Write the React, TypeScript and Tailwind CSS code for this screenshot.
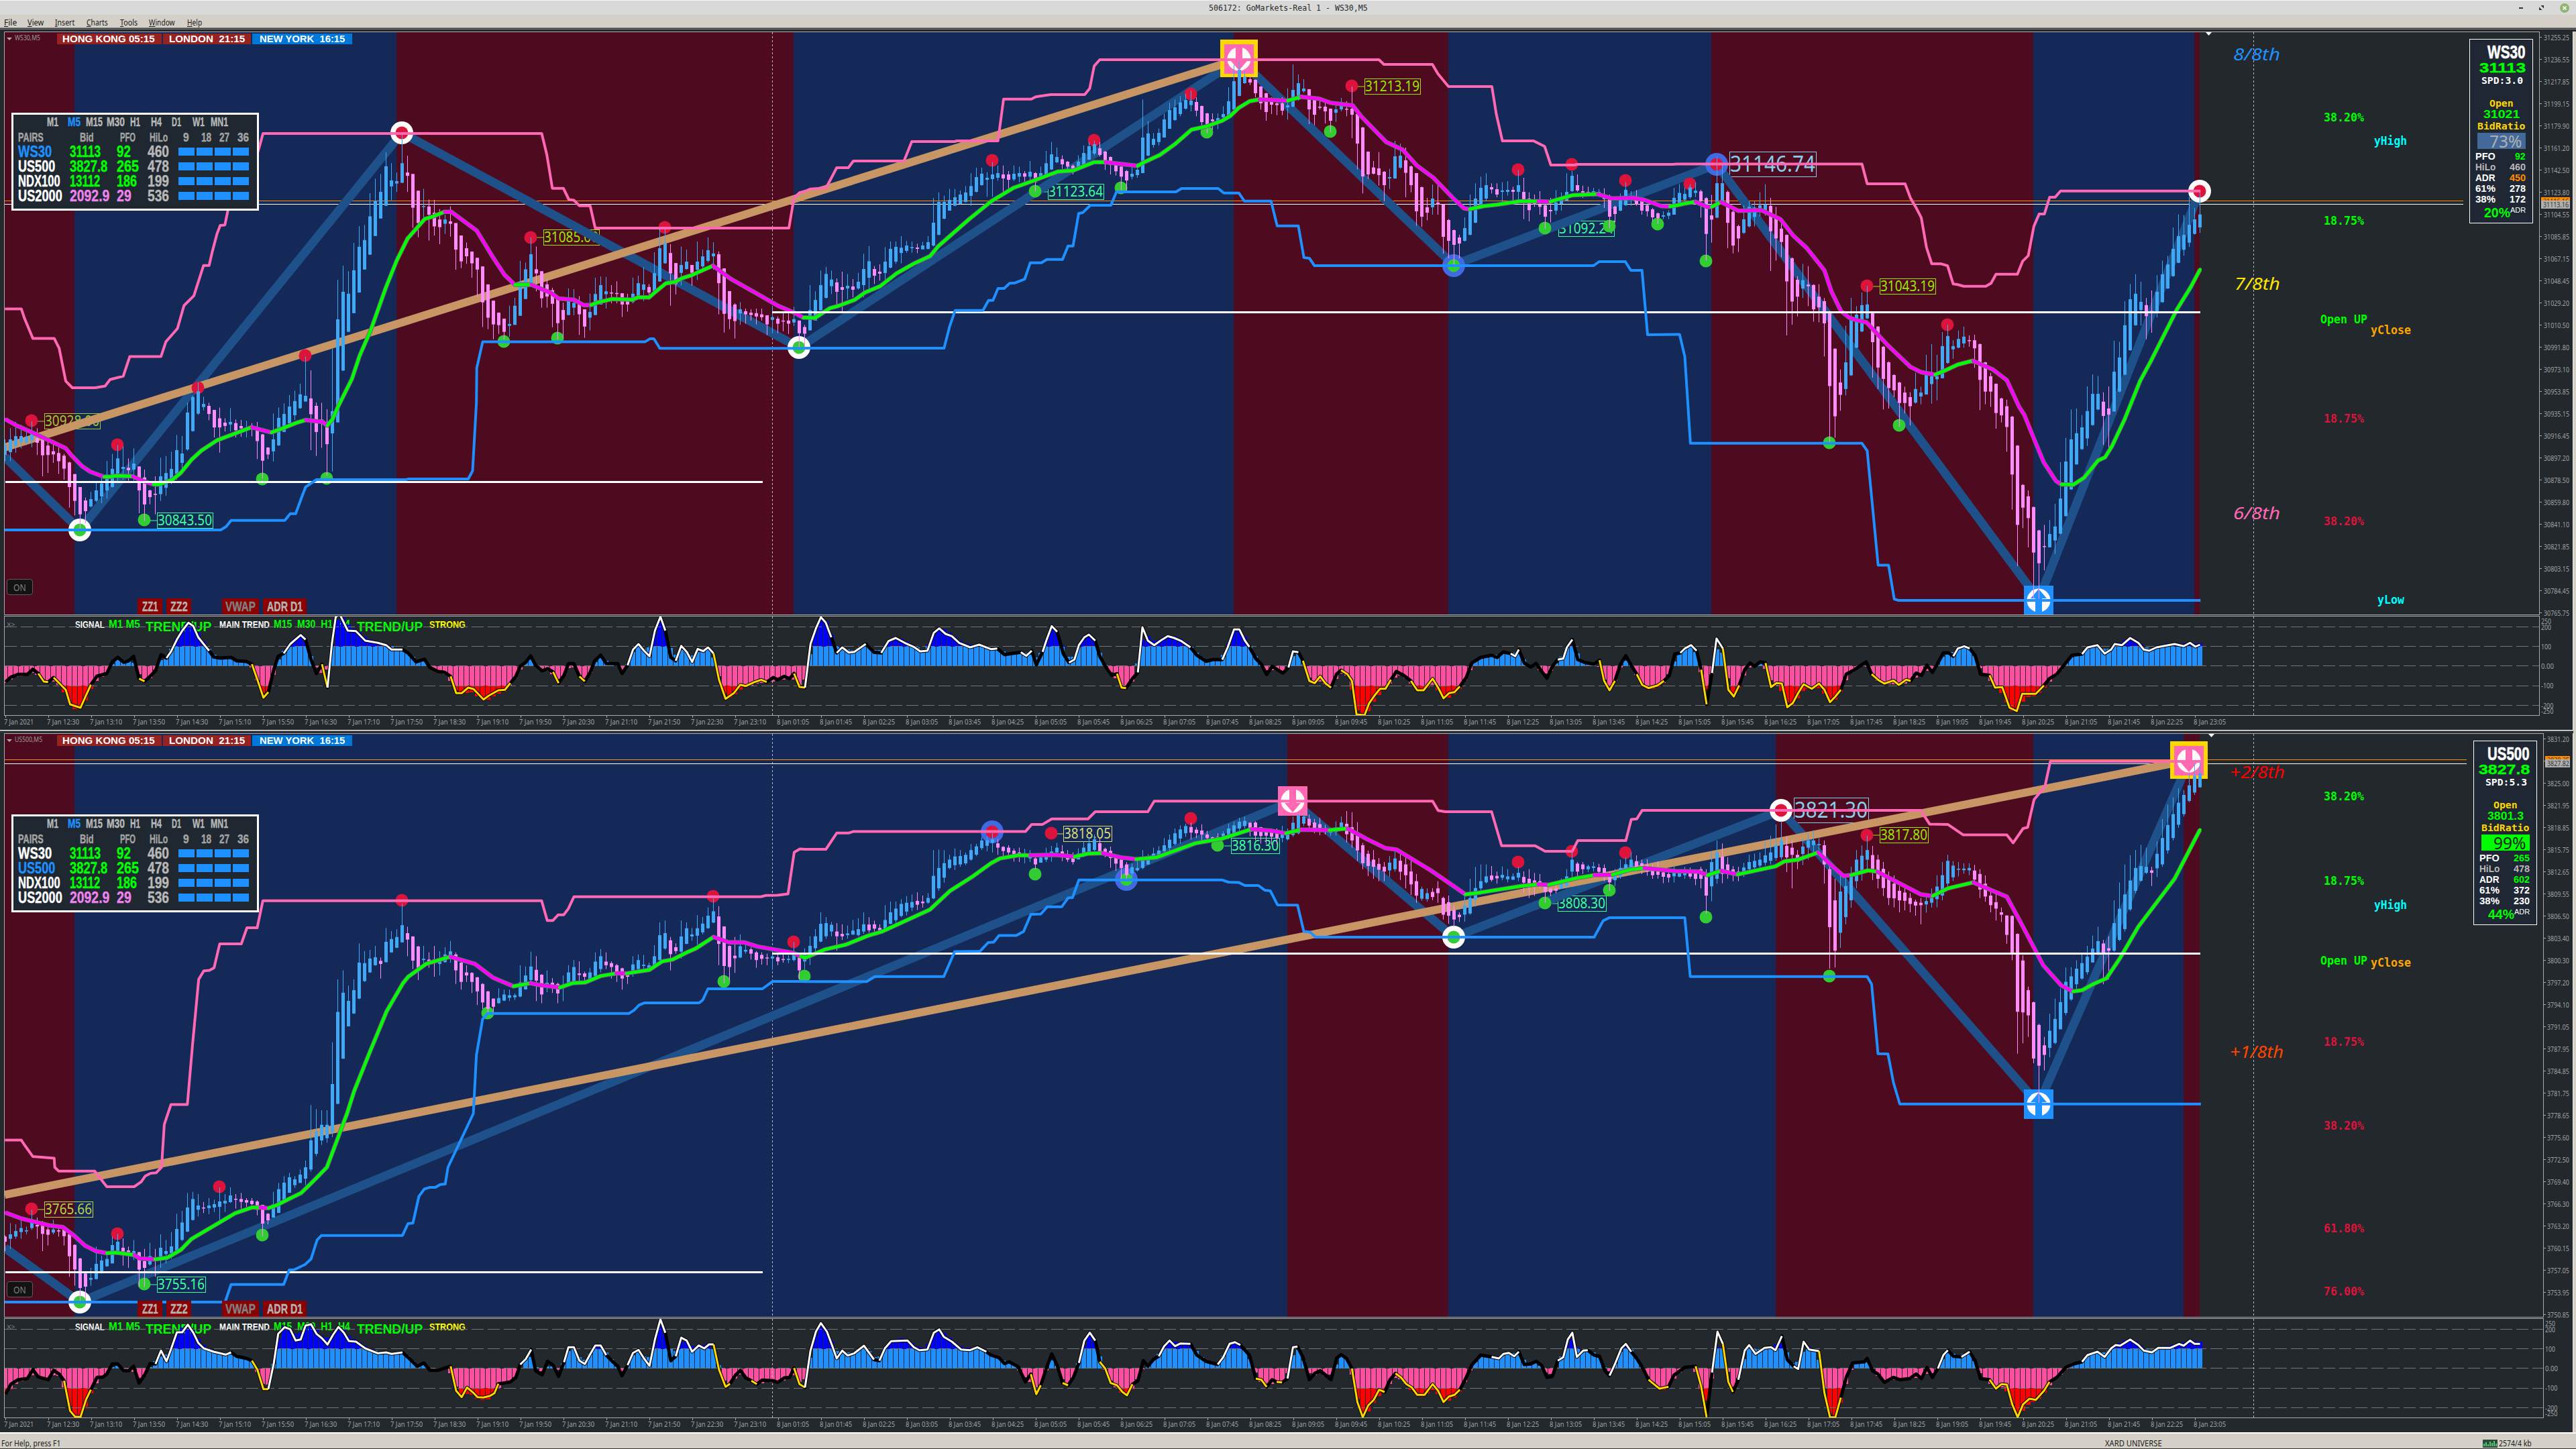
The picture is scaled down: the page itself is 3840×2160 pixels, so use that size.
import React, { useLayoutEffect, useRef, useState } from 'react';

type Pt = { x: number; y: number; c: string };
type Frame = [number, number, number, number];

// Segments keep their own origin and scale: [originX, originY, scaleX, scaleY]
const trace = ([ox, oy, kx, ky]: Frame, data: string): Pt[] => {
  let c = '';
  return data
    .trim()
    .split(/\s+/)
    .map((p) => {
      const m = p.match(/^([a-z]?)(-?[\d.]+),(-?[\d.]+)$/)!;
      if (m[1]) c = m[1];
      return { x: ox + +m[2] / kx, y: oy + +m[3] / ky, c };
    });
};

type Bar = { x: number; top: number; bot: number; hi: number; lo: number; up: boolean };

const candles = ([ox, oy, kx, ky]: Frame, data: string): Bar[] =>
  data
    .trim()
    .split(/\s+/)
    .map((p) => {
      const [x, top, bot, hi, lo] = p.slice(1).split(',').map(Number);
      return {
        x: 7 + 8 * Math.round((ox + x / kx - 7) / 8),
        top: oy + top / ky,
        bot: oy + bot / ky,
        hi: oy + hi / ky,
        lo: oy + lo / ky,
        up: p[0] === 'u',
      };
    });

// One candle every 8px, gaps are interpolated
const fillBars = (list: Bar[]): Bar[] => {
  const out: Bar[] = [];
  list.forEach((b, i) => {
    const a = list[i - 1];
    if (a) {
      if (b.x <= a.x) return;
      for (let x = a.x + 8; x < b.x; x += 8) {
        const t = (x - a.x) / (b.x - a.x);
        const j = ((x * 37) % 17) - 8;
        const mix = (p: number, q: number) => p + (q - p) * t;
        const top = mix(a.top, b.top) + j / 3;
        const bot = mix(a.bot, b.bot) + j / 4;
        out.push({ x, top, bot, hi: Math.min(top, mix(a.hi, b.hi) + j), lo: Math.max(bot, mix(a.lo, b.lo) + ((x * 13) % 11) - 5), up: b.up });
      }
    }
    out.push(b);
  });
  return out;
};

const path = (pts: Pt[]) => pts.map((p) => `${p.x.toFixed(1)},${p.y.toFixed(1)}`).join(' ');

// Splits a coloured trace into runs that share their end points
const runs = (pts: Pt[]) => {
  const out: { c: string; pts: Pt[] }[] = [];
  pts.forEach((p, i) => {
    const last = out[out.length - 1];
    if (last && last.c === p.c) last.pts.push(p);
    else out.push({ c: p.c, pts: i ? [pts[i - 1], p] : [p] });
  });
  return out;
};

const A: Frame = [0, 600, 1.225, 3];
const B: Frame = [300, 170, 1.7043, 2.8];
const C: Frame = [1200, 30, 1.2062, 3];
const D: Frame = [2500, 180, 1.9122, 2.0632];
const E: Frame = [0, 1740, 1.225, 3];
const F: Frame = [0, 1060, 1.3067, 2.6133];
const G: Frame = [1200, 1110, 0.7396, 2.8];
const O1: Frame = [1200, 915, 0.7396, 3];
const O2: Frame = [1200, 1960, 0.7396, 3];
const W: Frame = [0, 0, 0.40833, 0.40833];

type Chart = {
  symbol: string;
  top: number;
  width: number;
  height: number;
  bands: number[];
  bars: Bar[];
  upper: Pt[];
  lower: Pt[];
  ma: Pt[];
  zigzag: string;
  trend: string;
  highs: number[][];
  lows: number[][];
  rings: [number, number, string, string][];
  arrows: [number, number, string, boolean][];
  tags: [number, number, number, number, string, string][];
  opens: number[];
  bid: number;
  ask: number;
  quoteEnd: number;
  notes: [number, number, number, string, string][];
  murrey: [number, number, number, string, string][];
  osc: Pt[];
};

const ws30: Chart = {
  symbol: 'WS30,M5',
  top: 48,
  width: 3778,
  height: 868,
  bands: [7, 111, 591, 1183, 1839, 2159, 2551, 3031, 3271, 3279],
  bars: fillBars([
    ...candles(A, `u10,190,235,165,262 u20,165,222,115,262 u40,150,178,100,205 u58,140,170,85,200 d68,160,180,115,235 d78,165,236,160,330 d97,218,232,185,270 d117,238,296,230,345 d127,268,378,265,470 d137,320,440,320,505 d146,378,500,378,570 d156,438,486,425,540 u166,432,465,400,470 u186,362,420,335,450 u205,297,378,230,380 u215,250,318,190,350 u225,288,297,195,345 d235,292,303,250,350 u244,273,300,205,350 d254,286,393,286,495 d264,335,456,300,530 d274,393,423,390,455 d284,408,413,330,500 u293,330,410,247,440 u313,297,350,220,365 u323,213,320,145,345 u333,228,270,150,310 u343,45,210,0,215 u352,-25,128,-30,130 u362,-50,50,-90,55`),
    ...candles(B, `u6,1210,1223,1180,1237 d19,1218,1252,1205,1278 d33,1235,1308,1235,1350 d47,1270,1308,1225,1413 d60,1288,1302,1270,1325 u74,1285,1296,1227,1325 d88,1290,1320,1275,1350 d101,1302,1312,1277,1347 u115,1308,1312,1280,1350 d128,1306,1312,1290,1345 d142,1320,1365,1285,1440 d156,1337,1447,1335,1520 d170,1392,1421,1390,1440 u183,1358,1408,1250,1450 u197,1268,1383,1225,1385 u210,1252,1327,1208,1327 u224,1221,1291,1173,1291 u238,1198,1257,1155,1277 u251,1170,1228,1126,1230 u265,1176,1200,1012,1200 d279,1187,1253,1070,1403 d292,1218,1327,1204,1427 d306,1275,1288,1205,1393 d320,1290,1378,1232,1510 u333,1240,1333,980,1492 u347,857,1287,692,1287 u361,742,1071,633,1071 u374,750,909,656,909 u388,652,831,538,831 u402,554,745,468,745 u415,526,649,463,649 u429,427,587,330,587 u442,362,509,270,509 u456,325,436,250,436 u470,218,383,160,383 u483,277,302,205,360 u497,280,290,244,325 u510,205,287,85,287 d524,244,258,174,325 d538,250,391,250,475 d551,320,455,320,514 u565,384,388,312,440 d579,386,420,357,528 d592,412,469,358,507 d606,440,472,397,543 u619,440,458,420,500 d633,448,458,385,512 d647,455,566,455,650 d660,507,615,507,643 d674,560,594,536,625 d688,574,623,574,683 d701,600,649,600,764 d715,636,786,636,889 d729,711,850,711,898 d742,779,878,779,940 d756,829,881,829,918 d769,854,909,854,940 u783,876,884,800,930 u797,800,880,767,880 u810,700,842,613,842 u824,648,772,620,772 u838,585,705,515,705 d851,648,665,553,740 d865,656,769,656,808 d879,711,762,690,808 d892,735,792,725,890 d906,765,873,765,940 d919,818,859,787,935 u933,775,839,728,839 u947,788,808,731,840 d960,788,836,760,922 d974,815,887,815,934 u988,826,850,750,903 u1001,751,839,683,839 u1015,714,795,678,795 u1028,740,752,680,812 d1042,745,749,714,790 d1056,747,750,698,790 d1069,748,795,748,847 d1083,770,795,750,825 u1097,750,785,683,790 u1110,706,767,675,767 u1124,711,734,639,780 d1138,722,745,710,775 u1151,664,740,577,745 u1165,560,699,480,700 u1178,540,623,482,625 d1192,580,665,543,800 d1206,622,710,622,753 u1219,630,663,553,715 u1233,616,647,566,650 d1247,630,663,630,716 u1260,616,650,532,693 u1274,594,636,566,650 u1288,568,613,515,620 u1301,582,594,535,650 d1315,585,706,573,836 d1328,644,834,644,912 d1342,739,856,739,898 d1356,795,864,790,937 u1369,815,832,785,880 d1383,823,836,812,875 d1397,829,839,815,862 d1410,831,845,812,878 d1424,836,848,812,862 d1437,840,878,840,923 u1451,848,859,800,915 d1465,854,875,845,915 d1478,862,864,826,907 d1492,862,875,832,918 u1506,856,870,805,885 d1519,862,915,862,978 d1533,889,917,880,978 u1547,818,903,714,903 u1560,776,862,740,862`),
    ...candles(C, `u28,1185,1298,1120,1300 u38,1135,1242,1103,1245 u47,1160,1190,1120,1225 d57,1173,1215,1155,1280 d67,1194,1206,1125,1303 u77,1188,1200,1135,1248 d86,1191,1206,1158,1240 u96,1170,1200,1130,1205 u106,1113,1185,1045,1240 u115,1078,1152,1010,1210 d125,1113,1143,1100,1180 d134,1125,1134,1092,1165 u144,1080,1131,1015,1165 u154,1023,1107,990,1110 u163,1014,1080,990,1090 u173,1018,1041,966,1088 u183,1008,1032,988,1040 u192,1015,1020,990,1040 d202,1017,1023,1000,1042 u221,993,1023,966,1025 u231,906,1008,795,1012 u240,813,960,770,962 u250,813,888,785,890 u260,804,852,755,852 u269,792,830,755,832 u279,780,822,762,825 u289,771,813,742,815 u298,742,786,685,830 u308,702,768,660,770 u318,687,738,660,740 u327,705,714,680,790 u337,690,711,635,790 u347,684,705,650,718 d356,690,708,650,770 d366,690,714,675,770 u376,687,712,650,720 u385,684,700,655,725 d395,685,700,675,722 u405,678,700,630,720 d414,684,725,680,766 u424,684,700,655,705 u434,640,700,585,700 u443,600,668,545,670 u453,612,636,570,640 d463,622,645,605,665 d472,633,655,630,680 d482,651,665,645,690 u492,633,668,605,670 u501,594,650,560,655 u511,564,624,545,625 u520,555,597,540,605 d530,573,603,545,610 d540,588,640,585,670 d549,612,648,610,690 d559,640,676,635,695 d569,655,700,655,760 d578,675,717,670,770 u588,687,700,640,712 u598,669,693,640,705 u607,525,684,355,685 u617,507,606,452,608 u627,531,558,505,570 u636,504,545,485,560 u646,444,525,418,525 u656,402,486,370,486 u665,390,447,355,450 u675,368,420,340,430 u685,357,396,330,400 u694,360,380,315,408 d704,366,405,345,430 d713,384,456,382,475 d723,417,465,415,505 d733,444,452,417,490 u742,438,450,417,487 u752,420,435,385,440 u762,363,435,300,440 u771,273,400,200,405 u781,222,339,180,340 u790,253,282,228,285 d800,264,279,250,290 d810,267,327,265,345 d819,297,372,295,400 d829,327,411,325,450 d839,366,378,345,420 d848,372,380,350,425 d858,372,405,345,425 u868,381,390,305,445 u877,312,387,198,390 u887,282,357,243,360 u897,306,318,264,325 d906,309,399,308,465 d916,342,423,340,470 d925,387,392,350,400 d935,387,408,365,462 d945,396,450,395,500 u954,399,414,375,455 u964,375,399,348,408 d974,396,400,362,430 d984,396,423,298,528 d993,420,552,400,668 d1003,480,699,478,775 d1013,588,690,588,710 d1022,659,687,630,690 d1032,663,693,590,740 d1042,678,738,675,810 u1051,702,708,665,755 u1061,609,708,540,710 u1070,606,660,552,665 d1080,627,683,570,792 d1090,654,738,650,770 d1099,684,855,684,920 d1109,747,879,745,925 d1119,837,861,795,895 u1128,798,837,735,870 d1138,816,825,738,870 d1148,825,969,822,1045 d1157,894,987,890,1065 d1167,939,1005,937,1095 d1176,972,999,960,1065 u1186,930,987,882,990 u1196,849,960,780,962 u1205,798,906,730,908 u1215,750,832,700,835 u1225,738,798,685,810 d1234,747,757,730,775 d1244,756,780,730,792 u1254,762,768,725,815 u1263,759,768,720,785 d1273,759,768,745,812 u1283,738,768,670,810 d1292,768,810,705,890 d1302,798,850,770,900 d1311,815,825,780,835 d1321,824,835,765,870 d1331,828,879,825,932 d1340,849,855,795,905 u1350,816,852,760,870 u1360,790,822,770,852 u1369,768,807,685,810 u1379,696,765,675,768 d1389,738,762,690,768 d1398,765,773,740,795 d1408,768,776,745,785 u1417,765,776,750,790 u1427,768,774,755,790 d1437,783,800,752,840 d1446,786,879,780,930 d1456,834,867,830,905 u1465,804,852,775,855 u1475,759,828,725,830 u1485,795,803,765,830 d1494,800,825,760,830 d1504,801,852,795,870 d1514,828,855,825,878 d1523,846,882,840,900 d1533,864,885,860,912 u1543,873,879,855,890 u1552,861,875,850,890 u1562,795,870,750,870`),
    ...candles(D, `u7,222,253,195,260 u22,225,243,205,248 u37,205,235,195,240 u52,215,222,190,235 d68,217,247,212,298 d83,238,348,235,430 d98,291,304,228,375 u114,192,298,110,300 u129,192,247,130,250 d144,219,314,215,392 d160,280,384,275,408 d175,324,362,320,404 u190,303,345,260,348 u205,265,325,248,328 u221,267,296,247,325 u236,260,275,220,295 u251,257,275,195,292 d267,262,340,237,462 d282,296,362,265,430 d297,332,373,315,420 d312,351,494,350,660 d328,423,556,420,627 d343,489,541,478,602 u358,490,516,440,545 d374,504,509,447,570 d389,505,580,503,618 d404,541,574,503,620 d420,555,623,545,725 d435,588,816,585,990 d450,701,909,700,975 d466,805,843,765,892 u481,743,825,630,845 u496,612,783,545,785 u511,596,698,570,700 u527,567,648,528,650 u542,565,608,508,610 d557,592,681,590,790 d573,633,759,632,825 d588,695,794,693,888 d603,743,822,740,885 d618,782,829,780,850 d634,805,868,803,940 d649,836,868,818,900 d664,850,878,835,937 u680,825,867,775,870 u695,836,848,818,872 u710,782,842,720,842 u726,786,810,687,870 u741,786,795,720,860 u756,693,792,650,792 u771,662,745,628,748 u787,693,703,675,732 u802,671,698,645,700 u817,664,685,633,698 d832,675,678,660,695 d848,675,700,658,760 d863,687,797,685,890 d879,743,833,742,872 d894,786,833,775,880 d909,809,899,808,947 d925,854,906,852,928 d940,878,942,858,1018 d955,910,1088,908,1196 d971,999,1243,998,1370 d986,1120,1190,1118,1253 d1001,1155,1222,1137,1312 d1017,1188,1328,1187,1470 d1032,1260,1361,1258,1470 d1047,1308,1311,1243,1383 u1062,1271,1312,1228,1312 u1078,1248,1291,1178,1332 u1093,1162,1270,1050,1272 u1108,1048,1216,975,1217 u1124,980,1134,888,1135 u1139,961,1057,885,1057 u1154,943,1010,905,1012 u1169,893,977,817,1000 u1185,840,936,780,938 u1200,840,888,785,890 d1215,864,908,835,997 d1231,885,904,817,1010 u1246,772,894,677,895 u1261,728,833,680,835 u1276,629,781,555,783 u1292,549,706,502,707 u1307,532,629,472,630 u1322,557,582,495,630 d1338,567,601,545,672 d1353,585,588,522,652 u1368,526,586,475,605 u1384,472,558,430,560 u1399,442,516,415,517 u1414,394,478,328,480 u1430,355,437,288,438 u1445,351,397,290,415 u1460,320,375,235,388 u1475,303,348,268,350 u1491,288,328,220,345`),
  ]),
  upper: [
    ...trace(W, `3,188 13,188 15,194 20,206 33,206 36,212 40,232 44,236 58,236 64,235 67,231 75,229 79,217 98,217 101,208 108,200 112,186 118,180`),
    ...trace(B, `6,632 20,632 28,575 40,500 48,465 60,463 68,400 140,180 147,140 157,81 865,81 878,170 892,310 920,310 934,357 947,360 961,383 988,383 1001,476 1493,476 1506,350 1520,328`),
    ...trace(C, `0,765 10,755 38,750 57,660 78,660 87,630 178,630 192,543 270,543 272,540 347,540 357,353 407,353 415,343 442,333 503,333 512,305 520,205 530,177 1032,177 1041,198 1128,198 1138,240 1157,297 1235,297 1243,420 1254,540 1310,540 1330,565 1341,648 1385,648 1387,645 1560,645`),
    ...trace(D, `0,133 527,133 542,194 650,194 665,237 680,265 696,298 711,390 726,440 753,440 771,446 787,502 800,504 817,509 880,509 895,500 909,472 970,472 985,432 1001,415 1017,325 1032,287 1047,287 1062,235 1078,235 1093,216 1492,216`),
  ],
  lower: [
    ...trace(A, `8,570 403,570 413,555 422,527 520,527 530,497 540,497 550,430 558,378 578,345 742,345 745,342 855,342 863,305 870,0`),
    ...trace(B, `700,1060 715,951 1127,951 1140,938 1150,938 1165,978 1530,978`),
    ...trace(C, `0,1467 250,1467 260,1370 270,1298 320,1298 330,1253 338,1253 347,1200 358,1200 368,1177 378,1175 395,1158 405,1085 425,1085 435,1070 463,1070 473,1010 482,1010 492,865 500,860 513,828 550,828 560,768 667,768 677,753 743,753 753,773 780,773 790,809 838,809 849,920 887,920 897,1062 907,1065 916,1098 1418,1098 1428,1080 1475,1080 1485,1119 1505,1119 1515,1407`),
    ...trace(D, `0,657 7,657 22,725 38,992 527,992 542,1015 573,1367 603,1367 619,1471 630,1475 1492,1475`),
  ],
  ma: [
    ...trace(A, `m10,75 30,103 55,130 80,158 120,205 130,235 150,285 165,310 190,332 g200,332 212,328 242,330 m260,350 280,366 g290,367 315,345 330,315 350,255`),
    ...trace(B, `g0,1405 40,1362 128,1307 m150,1317 178,1329 g205,1313 240,1290 265,1277 m308,1285 320,1300 g333,1275 348,1220 383,1105 402,1010 430,905 470,720 497,610 524,520 568,438 590,427 618,408 m635,408 700,487 740,595 770,670 797,713 g838,712 m890,748 908,770 948,776 972,798 990,797 g1010,785 1045,772 1095,775 1110,765 1138,765 1150,748 1180,707 1205,700 1222,685 1245,673 1300,633 m1345,688 1410,748 1465,800 1505,828 1530,850`),
    ...trace(C, `g0,1330 18,1332 45,1288 60,1278 90,1250 108,1218 135,1190 165,1132 195,1090 225,1055 240,1010 295,890 335,810 375,750 412,717 455,677 482,673 520,635 540,635 m598,652 g610,635 638,603 665,555 695,490 722,475 750,450 765,428 780,392 800,362 817,355 m868,360 g892,343 m925,352 945,370 985,382 1000,430 1045,545 1075,580 1100,650 1130,705 1165,795 1185,842 1195,845 g1220,832 1245,825 1285,810 1318,810 m1340,812 g1380,783 1425,778 m1450,797 1490,795 1510,805 1540,832 1555,833`),
    ...trace(D, `g0,260 20,255 52,249 m85,265 98,265 g125,250 m175,277 240,275 295,303 330,352 370,392 420,460 440,525 467,585 490,605 510,613 540,620 600,690 665,757 695,773 735,781 g760,770 800,750 843,738 m900,765 940,798 975,880 990,905 1020,985 1045,1050 1080,1108 1095,1118 g1130,1119 1160,1098 1200,1045 1220,1035 1240,1000 1275,920 1320,800 1350,740 1425,580 1465,510 1491,457`),
  ],
  zigzag: '7,681 119,790 599,198 1191,518 1847,88 2167,395 2559,245 3039,894 3279,285',
  trend: '7,667 1847,88',
  highs: [[47, 627], [175, 663], [295, 578], [455, 530], [791, 354], [991, 339], [1479, 239], [1631, 209], [1775, 140], [2015, 128], [2263, 253], [2343, 245], [2423, 269], [2519, 274], [2783, 426], [2903, 484]],
  lows: [[215, 775], [391, 714], [487, 713], [751, 509], [831, 504], [1543, 285], [1671, 280], [1799, 197], [1983, 196], [2303, 340], [2399, 337], [2471, 334], [2543, 389], [2727, 660], [2831, 634]],
  rings: [[119, 790, '#fffafa', '#32cd32'], [599, 198, '#fffafa', '#dc143c'], [1191, 518, '#fffafa', '#32cd32'], [2167, 396, '#4169e1', '#32cd32'], [2559, 245, '#4169e1', '#dc143c'], [3279, 285, '#fffafa', '#dc143c']],
  arrows: [[1847, 88, '#ff69b4', true], [3039, 895, '#1e90ff', false]],
  tags: [
    [66, 616, 84, 24, '30928.00', '#9acd32'],
    [234, 764, 84, 24, '30843.50', '#3dff9a'],
    [810, 342, 84, 24, '31085.00', '#99e600'],
    [1562, 274, 84, 24, '31123.64', '#3dff9a'],
    [2034, 117, 84, 24, '31213.19', '#99e600'],
    [2323, 329, 84, 24, '31092.24', '#3dff9a'],
    [2578, 226, 130, 38, '31146.74', '#87ceeb'],
    [2802, 415, 84, 24, '31043.19', '#99e600'],
  ],
  opens: [718, 465],
  bid: 304,
  ask: 299,
  quoteEnd: 3672,
  notes: [
    [3464, 181, 60, '38.20%', '#00ff00'],
    [3539, 216, 49, 'yHigh', '#00ffff'],
    [3464, 335, 60, '18.75%', '#00ff00'],
    [3459, 482, 70, 'Open UP', '#00ff00'],
    [3534, 498, 60, 'yClose', '#ffa500'],
    [3464, 630, 60, '18.75%', '#dc143c'],
    [3464, 783, 60, '38.20%', '#dc143c'],
    [3544, 900, 40, 'yLow', '#00ffff'],
  ],
  murrey: [
    [3329, 90, 70, '8/8th', '#1e90ff'],
    [3331, 432, 68, '7/8th', '#ffe600'],
    [3329, 774, 70, '6/8th', '#ff69b4'],
  ],
  osc: [
    ...trace(A, `k10,1250 20,1228 33,1216 50,1216 60,1193 70,1212 y80,1248 88,1250 k98,1230 y108,1255 120,1285 128,1350 147,1365 157,1310 166,1262 k177,1224 195,1212 205,1160 215,1140 226,1162 235,1155 244,1135 254,1235 y264,1247 k274,1225 284,1200 294,1128 304,1143 w312,1115 323,1060 333,1020 344,985 353,1000 362,1050 375,1090 382,1110 k390,1138 402,1143 422,1140 432,1155 450,1158 460,1170 y470,1240 481,1320 490,1295 k500,1195 508,1135 518,1122 w530,1080 549,1040 558,1060 k568,1150 578,1212 588,1170 y598,1275 w606,1080 613,960 620,945 635,1020 650,1022 667,1065 690,1075 705,1085 715,1105 735,1105 k745,1120 760,1160 775,1148 785,1185 800,1203 812,1207 823,1225 y833,1300 843,1300 855,1275 865,1282 883,1328 892,1312 910,1287 922,1285 932,1255 k942,1225 950,1180 960,1162 969,1133 978,1175 990,1200 1000,1190 1010,1205 y1020,1255 k1030,1220 1038,1168 1048,1168 1058,1225 y1068,1247 k1078,1205 1086,1155 1097,1130 1107,1167 1128,1168 1136,1212 1146,1175 w1156,1105 1166,1080 1176,1110 1186,1135 1196,1020 1206,958 1215,1020 k1225,1140 1234,1155 w1244,1088 1254,1115 1264,1160 1274,1102 1284,1112 1293,1095 1303,1122 y1313,1240 1325,1325 1340,1300 1352,1262 1362,1268 1378,1250 1390,1240 1400,1250 k1412,1230 1420,1240 1432,1225 1442,1235 1450,1212 y1460,1272 1470,1275 w1480,1080 1490,1010 1499,960 1508,985 1518,1050 k1528,1120 w1538,1095 1550,1118 1560,1115`),
    ...trace(O1, `w67,135 k76,172 84,175 w92,122 100,108 110,130 120,148 127,168 135,165 142,85 148,65 155,90 162,100 170,130 182,150 192,138 205,158 212,155 k220,182 238,172 w244,188 250,165 k255,228 262,170 w266,120 272,55 278,80 k285,180 291,218 w297,205 302,140 308,105 313,93 320,120 k325,190 332,240 338,275 344,268 y349,330 354,332 k361,290 367,262 w372,60 378,120 385,140 392,120 400,100 407,108 415,122 425,150 k432,185 442,212 450,205 460,205 w466,150 473,70 479,70 485,120 490,148 k497,200 503,225 509,272 515,235 527,265 533,240 w538,168 544,172 k549,210 y556,300 562,310 568,280 574,312 580,330 k586,270 591,252 y598,270 603,300 608,450 617,453 622,400 628,365 634,335 640,335 646,295 k652,258 660,275 668,300 y675,342 682,342 692,290 698,330 704,378 710,355 716,350 722,325 k729,285 735,220 745,195 757,185 763,195 770,170 778,178 w783,190 787,160 k793,220 800,238 806,222 813,262 818,288 824,235 830,205 w836,200 840,150 846,115 k852,205 860,218 870,225 876,208 y881,300 887,342 893,300 k899,225 905,188 911,230 917,270 y923,318 930,332 940,320 947,300 k953,275 959,180 965,175 w970,155 977,140 983,165 k988,250 y994,405 k1000,265 w1005,110 1012,155 y1018,340 1024,370 1030,320 k1036,250 1042,220 1047,235 1053,215 1059,220 y1065,328 1071,310 1077,312 1083,418 1089,400 1095,355 1101,315 1110,335 1118,312 1124,340 1130,395 1136,370 1142,340 k1148,270 1155,255 1160,242 1170,215 1176,270 y1184,298 1190,312 1200,298 1206,318 1214,295 1219,300 k1225,265 1231,275 1237,230 1243,262 1249,220 1255,175 1261,175 1266,190 w1271,155 1278,145 1284,155 k1290,185 1296,270 1306,275 y1312,330 1320,328 1328,420 1336,435 1342,358 1357,358 1366,320 k1372,290 1380,270 1390,220 1397,185 1408,180 w1414,150 1425,140 1433,178 1440,160 1444,135 1452,140 1461,108 1470,130 1476,160 1482,165 1490,150 1510,135 1520,145 1527,130 1533,147 1538,138`),
  ],
};

const us500: Chart = {
  symbol: 'US500,M5',
  top: 1094,
  width: 3784,
  height: 869,
  bands: [7, 111, 1919, 2159, 2647, 3031, 3255, 3279],
  bars: fillBars([
    ...candles(E, `d10,310,333,305,375 u20,300,320,250,365 u29,285,310,255,320 u39,272,290,235,320 u49,282,287,265,300 u58,247,272,190,280 d68,258,265,225,320 d78,262,298,240,375 d88,278,302,255,350 u97,278,292,235,300 d107,282,287,265,310 d117,270,308,265,350 d127,300,398,298,490 d137,347,457,345,530 d146,408,540,405,600 d156,475,534,470,590 u166,495,503,450,530 u176,432,500,355,502 u186,417,472,395,475 u195,410,443,385,445 u205,348,430,310,430 u215,333,378,298,380 d225,360,378,318,440 d235,372,385,355,450 u244,375,400,325,415 d254,380,458,378,535 d264,420,450,365,535 u274,397,435,338,440 d284,405,415,365,490 u293,360,400,300,450 u303,375,388,325,430 u313,354,384,290,410 u323,276,372,208,375 u333,247,325,195,330 u343,180,288,115,290 u352,142,236,110,238 u362,171,190,120,220 d372,180,183,155,205 u382,171,183,138,210 u391,165,180,145,200 u401,153,177,90,240 u411,150,162,120,200 u421,126,156,90,160 d431,141,145,120,185 d440,142,155,115,185 d450,147,158,138,178 d460,150,165,138,180 d470,153,190,148,215 d480,168,252,168,310 d489,208,237,205,255 u499,165,225,110,225 u509,98,204,70,205 u519,69,153,40,155 u529,45,114,25,115 u538,54,80,40,92 u548,33,70,10,70 u558,0,51,-30,80 u568,-120,10,-278,20 u577,-160,-60,-260,-50 u587,-190,-120,-255,-100 u597,-190,-130,-255,-110`),
    ...candles(F, `u647,1453,1640,1290,1660 u658,1172,1530,1045,1531 u668,1097,1354,1010,1355 u679,1129,1228,1070,1229 u689,1087,1178,1045,1180 u700,980,1120,905,1122 u710,982,1052,935,1055 u721,964,1018,930,1020 u731,959,990,915,992 d741,973,985,960,1042 u752,899,978,845,980 u763,888,940,857,941 u773,880,922,850,923 u783,834,901,750,901 d794,865,890,840,955 d804,878,972,877,1005 d815,917,1005,915,1048 u825,965,970,915,985 d836,968,980,940,1000 d846,967,977,915,1035 u857,970,985,935,1030 u867,948,978,920,980 u878,936,955,895,980 d888,948,1010,940,1063 d898,980,1055,975,1085 d909,1018,1030,990,1055 d919,1020,1055,1017,1098 d930,1037,1092,1036,1145 d940,1063,1135,1060,1160 d950,1092,1160,1090,1178 d961,1120,1152,1120,1180 u972,1118,1138,1080,1140 u982,1104,1128,1085,1130 u992,1107,1117,1085,1130 u1002,1107,1115,1100,1125 u1013,1057,1112,990,1115 u1023,1030,1084,995,1085 u1034,995,1048,937,1062 d1044,1008,1050,955,1130 d1055,1027,1104,1025,1138 u1065,1058,1068,1010,1095 d1076,1058,1075,1040,1098 d1086,1063,1100,1058,1138 u1097,1065,1080,1030,1130 u1107,1018,1070,990,1072 u1118,997,1055,970,1057 d1128,1022,1028,975,1060 d1138,1022,1035,1015,1062 u1149,1018,1045,1000,1048 u1159,976,1032,940,1033 u1170,955,1005,927,1018 d1180,976,990,940,1005 d1191,982,997,975,1042 d1201,990,1020,985,1055 d1212,1002,1042,1000,1085 d1222,1020,1035,1015,1063 u1232,987,1022,955,1035 u1243,970,1005,948,1008 u1254,988,993,950,1010 u1264,990,1010,980,1015 u1275,955,998,912,1000 u1285,873,970,823,975 u1296,865,925,816,930 d1306,893,947,880,1010 d1316,920,935,905,945 u1327,878,937,816,965 u1337,846,907,823,908 u1348,870,878,845,895 u1358,846,875,795,910 u1368,828,862,802,870 u1379,797,846,765,848 u1389,780,824,730,826 d1400,800,907,760,990 d1410,839,993,838,1060 d1421,915,997,913,1050 d1431,953,963,880,1020 u1442,916,960,870,962 u1453,930,937,905,945 d1463,928,945,920,968 d1474,940,970,935,1000 d1484,950,965,940,988 d1494,960,963,945,990 u1505,956,964,920,1008 d1515,959,975,945,990 d1526,966,970,948,980 u1536,965,970,950,982 u1547,948,970,900,975 d1557,960,1010,958,1045`),
    ...candles(G, `u0,870,905,850,940 u6,840,880,800,920 u12,800,850,770,880 u18,748,822,700,825 u24,745,800,720,810 u30,752,780,740,800 d36,780,800,745,860 d41,790,800,750,815 u47,788,795,755,810 u59,770,795,725,800 u65,750,780,700,790 d77,750,768,735,780 d83,765,775,750,785 u89,732,770,670,775 u95,700,748,655,750 u106,665,715,645,720 u118,657,680,625,695 d130,655,662,630,680 u136,640,660,620,665 u142,548,642,440,645 u148,515,600,438,610 u160,480,515,460,520 u171,465,500,440,510 u183,440,480,415,485 u195,400,432,385,440 u206,395,410,370,450 d212,412,430,395,460 d224,430,450,420,470 d236,450,465,430,490 u248,455,475,440,490 d254,475,500,470,520 u266,460,480,430,490 u277,430,450,410,460 d290,465,480,440,490 d296,475,490,450,500 u308,430,465,405,470 u320,395,440,375,450 d332,435,460,430,470 d349,480,515,475,560 d355,500,545,490,565 u367,515,525,480,530 u373,480,515,440,520 u385,455,475,430,480 u396,420,445,390,450 u408,370,415,350,420 u420,340,370,330,385 d432,355,370,345,390 d443,375,390,360,400 d455,385,392,370,405 u467,350,390,330,395 u479,322,350,305,360 u485,318,340,300,350 d497,325,380,320,400 d508,360,380,355,415 d520,370,390,350,415 u532,370,395,350,400 u543,295,370,290,375 u549,300,330,290,340 d561,325,350,310,370 d573,350,360,335,375 u585,345,365,320,380 u591,325,355,300,360 d603,345,400,282,430 d614,420,495,410,520 d626,480,510,440,560 d638,510,530,490,570 u650,475,520,440,530 d661,500,545,460,600 d673,570,630,540,660 u685,620,645,600,655 d697,600,620,570,660 d703,640,710,635,730 d715,690,730,670,760 d720,710,720,700,740 u732,640,705,560,710 u744,570,600,500,620 u750,550,575,500,580 d761,548,558,530,580 u773,550,562,520,575 u785,535,555,510,570 d797,560,590,520,640 d808,570,585,540,600 d818,590,615,580,660 d826,600,610,580,620 u838,550,590,520,600 u846,480,530,450,560 d856,500,520,490,540 u868,508,515,490,530 d880,515,545,500,570 d888,545,575,530,610 u899,515,550,480,560 u908,480,515,450,520 d921,495,520,480,540 d935,520,545,500,560 d950,540,555,520,575 u970,530,545,510,560 d988,520,560,510,600 d994,540,630,520,705 u1006,450,560,400,580 d1018,500,530,470,560 d1028,530,540,510,570 u1040,490,520,460,530 u1052,480,505,450,515 u1064,450,485,380,500 u1076,400,470,320,480 d1088,430,460,400,600 d1094,460,490,440,520 u1106,400,430,370,480 u1118,415,420,390,440 d1124,420,500,400,580 d1130,520,762,500,935 d1136,650,860,560,930 u1148,590,720,540,750 u1160,480,570,440,600 u1172,440,480,380,530 d1184,480,560,460,600 d1195,560,640,530,670 d1207,610,650,590,700 d1219,640,665,620,700 d1231,660,670,640,750 u1243,640,660,600,680 u1254,545,630,490,650 u1262,485,580,460,600 u1272,518,522,490,550 u1284,515,525,495,545 d1296,540,605,520,640 d1308,630,670,600,700 d1320,700,710,680,740 d1330,715,870,712,900 d1338,790,1115,788,1290 d1348,1025,1130,1010,1220 d1354,1075,1310,1073,1330 d1360,1170,1340,1165,1500 d1367,1255,1295,1220,1360 u1378,1145,1245,1060,1250 u1390,990,1120,930,1130 u1402,935,1000,900,1020 u1414,885,950,840,960 u1426,820,870,760,880 d1432,830,870,815,1000 d1438,850,860,800,980 u1444,745,860,650,865 u1456,625,770,500,780 u1467,515,610,440,620 u1479,510,535,430,540 d1485,525,535,510,590 u1497,390,500,310,510 u1509,290,390,220,400 u1520,210,290,190,300 u1527,170,235,120,240 u1532,130,200,80,210 u1538,120,178,75,180`),
  ]),
  upper: [
    ...trace(W, `3,694 13,694 15,697 20,704 33,705`),
    ...trace(E, `100,0 107,17 173,17 180,40 195,87 245,87 258,65 265,40 275,27 285,25 295,0`),
    ...trace(F, `320,1610 333,1533 365,1533 375,1300 387,1045 397,1012 408,1010 417,1000 428,907 470,907 481,844 501,844 512,739 1055,739 1066,816 1077,816 1087,794 1098,794 1107,770 1118,723 1482,723 1492,718 1515,717 1535,712 1547,550 1558,537`),
    ...trace(G, `0,437 23,437 35,369 48,369 53,363 243,363 250,333 262,333 272,310 312,310 320,280 378,280 385,236 692,236 698,275 706,280 757,280 768,422 805,422 816,445 846,445 852,400 905,400 911,312 917,310 923,274 1230,274 1240,332 1260,333 1277,377 1325,377 1332,410 1343,350 1348,345 1355,230 1367,175 1373,70 1539,70`),
  ],
  lower: [
    ...trace(E, `8,603 411,603 422,524 518,524 528,460 537,458 557,435 568,410 579,325 587,305 735,305 745,252 754,250 765,130 775,97 785,90 795,90 804,77 813,75 818,0`),
    ...trace(F, `922,1568 928,1340 940,1200 950,1178 1225,1178 1235,1165 1245,1145 1255,1137 1362,1137 1369,1125 1379,1082 1485,1082 1505,1053 1560,1053`),
    ...trace(G, `0,989 68,989 77,968 153,968 165,864 193,862 202,826 208,825 214,797 233,797 241,780 249,708 260,707 267,677 283,677 290,640 295,638 302,565 460,565 467,574 478,575 485,588 500,588 507,608 513,610 521,669 543,670 550,780 557,783 563,804 870,804 880,735 887,722 970,722 976,968 1171,968 1176,1000 1183,1290 1194,1291 1200,1410 1207,1500 1539,1500`),
  ],
  ma: [
    ...trace(E, `m10,203 40,230 90,260 115,268 135,305 155,350 175,375 195,384 g212,382 245,392 m255,408 283,412 g305,405 330,370 350,320 400,248 430,205 460,180 475,180 m490,183 g505,170 525,145 550,115 575,55 597,0`),
    ...trace(F, `g676,1568 690,1480 720,1330 753,1170 785,1060 795,1035 830,985 877,957 m925,985 960,1038 1000,1072 g1033,1060 m1050,1067 1090,1077 g1115,1060 1140,1057 1170,1032 1200,1022 m1220,1022 g1265,1008 1290,975 1310,968 1340,938 1355,925 1390,880 m1420,901 1450,901 1475,917 1545,942 1560,955`),
    ...trace(G, `g0,890 22,855 45,835 70,797 85,780 138,688 160,610 185,550 205,495 215,475 235,462 248,462 m275,460 297,468 g312,455 328,453 m350,472 365,478 g388,470 430,412 460,392 492,353 m512,358 530,370 g547,355 m578,357 g598,350 m620,395 640,432 652,438 690,525 715,590 728,625 g745,617 790,590 808,583 m820,585 g850,558 870,545 m890,543 g910,522 925,515 m960,528 985,530 995,545 g1010,527 m1028,542 g1070,508 1080,487 1095,480 1117,450 m1130,498 1145,548 1153,545 g1172,525 1182,530 m1230,625 1243,632 g1260,600 1288,575 m1325,635 1340,740 1365,920 1385,1005 1398,1030 g1408,1025 1420,1000 1435,975 1450,890 1470,760 1510,560 1538,355`),
  ],
  zigzag: '7,1860 119,1941 1927,1194 2167,1397 2655,1208 3039,1646 3263,1135',
  trend: '7,1781 3263,1133',
  highs: [[47, 1802], [175, 1839], [327, 1769], [599, 1342], [1063, 1336], [1183, 1404], [1567, 1242], [1775, 1220], [2263, 1285], [2343, 1269], [2423, 1271], [2783, 1245]],
  lows: [[215, 1914], [391, 1841], [727, 1510], [1079, 1463], [1199, 1455], [1543, 1303], [1815, 1260], [2303, 1346], [2399, 1327], [2543, 1367], [2727, 1455]],
  rings: [[119, 1941, '#fffafa', '#32cd32'], [1479, 1240, '#4169e1', '#dc143c'], [1679, 1311, '#4169e1', '#32cd32'], [2167, 1397, '#fffafa', '#32cd32'], [2655, 1208, '#fffafa', '#dc143c']],
  arrows: [[1927, 1194, '#ff69b4', false], [3039, 1646, '#1e90ff', false], [3263, 1134, '#ff69b4', true]],
  tags: [
    [66, 1791, 73, 24, '3765.66', '#b4d24b'],
    [234, 1903, 73, 24, '3755.16', '#3dff9a'],
    [1585, 1231, 73, 24, '3818.05', '#d8d878'],
    [1835, 1249, 73, 24, '3816.30', '#3dff9a'],
    [2322, 1335, 73, 24, '3808.30', '#3dff9a'],
    [2674, 1189, 112, 38, '3821.30', '#87ceeb'],
    [2802, 1233, 73, 24, '3817.80', '#99e600'],
  ],
  opens: [1896, 1421],
  bid: 1138,
  ask: 1132,
  quoteEnd: 3677,
  notes: [
    [3464, 1193, 60, '38.20%', '#00ff00'],
    [3464, 1319, 60, '18.75%', '#00ff00'],
    [3539, 1355, 49, 'yHigh', '#00ffff'],
    [3459, 1438, 70, 'Open UP', '#00ff00'],
    [3534, 1441, 60, 'yClose', '#ffa500'],
    [3464, 1559, 60, '18.75%', '#dc143c'],
    [3464, 1684, 60, '38.20%', '#dc143c'],
    [3464, 1837, 60, '61.80%', '#dc143c'],
    [3464, 1931, 60, '76.00%', '#dc143c'],
  ],
  murrey: [
    [3324, 1160, 82, '+2/8th', '#ff0000'],
    [3324, 1577, 80, '+1/8th', '#ff4500'],
  ],
  osc: [
    ...trace(E, `y10,1015 k20,970 33,950 50,945 60,905 70,938 88,950 98,908 108,925 117,955 y128,1090 137,1115 147,1117 157,1040 166,995 k177,940 188,938 195,925 205,880 215,880 226,910 235,910 244,890 254,965 264,930 274,878 284,880 w294,820 304,868 312,815 323,738 333,738 343,704 353,740 362,785 372,810 390,825 402,832 412,838 422,828 k432,845 450,855 460,865 y470,905 481,992 490,992 w500,875 508,745 520,715 530,725 540,775 549,770 558,708 568,702 578,745 588,765 598,793 608,750 618,714 628,740 637,777 650,780 667,810 690,832 705,828 715,835 735,828 k745,850 762,890 774,875 785,908 800,908 823,890 y833,1000 843,1028 853,985 865,1010 872,1028 883,1030 895,1022 903,1010 910,968 k920,965 932,960 942,940 950,882 w960,858 970,815 k978,910 990,928 1000,868 1010,885 1020,935 1030,872 w1038,805 1048,805 1058,865 1068,880 1078,835 1087,797 1097,797 1107,840 k1117,865 1128,890 1136,932 1146,885 w1156,830 1166,817 1176,855 1186,888 1196,770 1206,680 1215,740 k1225,865 1234,845 w1244,762 1254,775 1264,825 1276,797 1286,810 1295,792 1303,792 y1313,905 1325,982 1333,968 k1343,930 1352,908 1362,942 1372,955 y1382,970 k1392,952 1412,955 1420,962 1432,942 1442,940 1450,898 y1460,970 1470,985 w1480,820 1490,735 1499,697 1510,735 1520,800 1528,855 1538,820 1548,842 1560,832`),
    ...trace(O2, `w65,138 76,200 k82,205 w88,150 95,118 113,115 120,145 126,158 135,155 142,80 148,65 153,98 162,120 172,155 182,158 190,145 200,165 k205,180 214,192 220,218 225,210 235,232 243,300 249,265 y255,355 260,315 k266,240 272,175 278,225 284,305 y290,315 k296,280 302,215 w308,115 314,80 320,115 k325,210 y331,240 337,305 344,315 350,345 355,360 361,310 k367,295 373,205 378,230 384,200 390,185 w396,140 402,115 408,140 414,128 425,130 k432,180 442,208 455,222 w461,190 468,130 474,122 480,135 k490,180 497,285 y503,290 509,322 k515,290 520,300 y526,302 k532,285 w538,145 543,142 k549,190 556,290 562,262 568,250 574,270 580,290 586,195 591,178 597,195 603,240 y609,390 615,458 621,405 627,380 633,335 639,345 k645,290 651,262 y657,280 663,310 669,325 675,358 683,358 692,310 698,340 704,390 710,365 716,358 722,335 k729,280 735,225 745,180 757,188 w765,195 770,175 776,170 782,185 787,165 k793,222 800,220 806,208 812,225 818,280 824,275 830,205 w836,190 841,110 846,80 851,188 858,160 863,158 k870,180 876,185 882,250 887,272 w893,220 900,150 905,130 911,165 k917,195 924,240 930,290 y936,310 942,330 952,322 k958,270 970,235 982,230 y988,320 994,458 k1000,258 w1006,75 1012,130 y1018,300 1023,345 k1029,290 w1036,160 1041,135 1048,175 1058,148 1065,145 1070,158 1077,95 k1083,200 1090,230 w1095,242 1101,120 1107,155 1118,162 y1124,350 1130,458 1136,458 1142,370 k1148,280 1155,215 1168,210 1171,195 1177,250 1183,265 1190,302 1200,280 1207,290 1218,285 1225,265 1231,285 1237,235 1243,280 1249,240 w1255,180 1260,158 k1266,185 1275,188 w1284,165 k1290,205 1296,285 1306,290 y1313,330 1319,310 1325,312 1331,400 1337,458 1343,400 1350,375 1357,380 1366,340 1372,300 k1380,280 1390,235 1400,218 1408,210 w1414,180 1425,165 1433,188 1440,150 1445,135 1450,138 1461,110 1470,135 1476,160 1485,168 1492,148 1505,148 1515,130 1520,138 1527,115 1532,130 1538,130`),
  ],
};

const WS30_PRICES = ['31255.25', '31236.55', '31217.85', '31199.15', '31179.90', '31161.20', '31142.50', '31123.80', '31104.55', '31085.85', '31067.15', '31048.45', '31029.20', '31010.50', '30991.80', '30973.10', '30953.85', '30935.15', '30916.45', '30897.20', '30878.50', '30859.80', '30841.10', '30821.85', '30803.15', '30784.45', '30765.75'];
const US500_PRICES = Array.from({ length: 27 }, (_, i) => (Math.round((3831.2 - i * 3.09) * 20) / 20).toFixed(2));

const TIMES = Array.from({ length: 52 }, (_, i) => {
  if (i === 0) return '7 Jan 2021';
  const min = i < 18 ? 750 + (i - 1) * 40 : 65 + (i - 18) * 40;
  const two = (n: number) => String(n).padStart(2, '0');
  return `${i < 18 ? 7 : 8} Jan ${two(Math.floor(min / 60))}:${two(min % 60)}`;
});

// Squeezes or stretches its text to a fixed width
const Fit = ({ w, className = '', children }: { w: number; className?: string; children: React.ReactNode }) => {
  const ref = useRef<HTMLSpanElement>(null);
  const [k, setK] = useState(1);
  useLayoutEffect(() => {
    if (ref.current) setK(w / ref.current.offsetWidth);
  }, [w]);
  return (
    <span className={`block shrink-0 text-left ${className}`} style={{ width: w }}>
      <span ref={ref} className="inline-block origin-left whitespace-pre" style={{ transform: `scaleX(${k})` }}>
        {children}
      </span>
    </span>
  );
};

const ArrowBox = ({ x, y, color, gold }: { x: number; y: number; color: string; gold: boolean }) => {
  const up = color === '#1e90ff';
  return (
    <g transform={`translate(${x} ${y})`}>
      {gold && <rect x="-28" y="-29" width="56" height="56" fill="#ffd700" />}
      <rect x="-22" y="-22" width="44" height="44" fill={color} />
      <circle r="17.5" fill="#fffafa" />
      <path d="M-5 -18h10v21h7L0 17L-12 3h7z" fill={color} transform={up ? 'scale(1 -1)' : undefined} />
    </g>
  );
};

const PricePlot = ({ c }: { c: Chart }) => {
  const bottom = c.top + c.height;
  return (
    <svg className="block" width={c.width} height={c.height} viewBox={`7 ${c.top} ${c.width} ${c.height}`}>
      {c.bands.slice(1).map((x, i) => (
        <rect key={i} x={c.bands[i]} y={c.top} width={x - c.bands[i]} height={c.height} fill={i % 2 ? '#142958' : '#4e0a1e'} shapeRendering="crispEdges" />
      ))}
      {[1151.5, 3359.5].map((x) => (
        <line key={x} x1={x} x2={x} y1={c.top} y2={bottom} stroke="#b8b8c4" strokeDasharray="3 3" />
      ))}
      <path d={`M7 ${c.ask + 0.5}H${c.quoteEnd}`} stroke="#ff8c00" />
      <path d={`M7 ${c.bid + 0.5}H${c.quoteEnd}`} stroke="#fff" />
      {c.tags.map(([x, y, w, h, t, color]) => (
        <g key={t}>
          {h < 30 && <path d={`M${x - 10} ${y + h / 2}H${x}`} stroke={color} />}
          <rect x={x + 0.5} y={y + 0.5} width={w - 1} height={h - 1} fill="none" stroke={color} />
          <text x={x + 1} y={y + h * 0.8} fill={color} fontSize={h < 30 ? 22 : 32} textLength={w - 3} lengthAdjust="spacingAndGlyphs" className="font-['Noto_Sans']">
            {t}
          </text>
        </g>
      ))}
      <polyline points={c.zigzag} fill="none" stroke="#1e508a" strokeWidth="13" />
      <polyline points={c.trend} fill="none" stroke="#c89664" strokeWidth="12" />
      {c.rings.map(([x, y, ring, dot]) => (
        <g key={x}>
          <circle cx={x} cy={y} r="17" fill={ring} />
          <circle cx={x} cy={y} r="9.5" fill={dot} />
        </g>
      ))}
      {c.arrows.map(([x, y, color, gold]) => (
        <ArrowBox key={x} x={x} y={y} color={color} gold={gold} />
      ))}
      {c.highs.map(([x, y]) => (
        <circle key={x} cx={x} cy={y} r="9.5" fill="#dc143c" />
      ))}
      {c.lows.map(([x, y]) => (
        <circle key={x} cx={x} cy={y} r="9.5" fill="#32cd32" />
      ))}
      {c.bars.map((b) => (
        <g key={b.x} fill={b.up ? '#40a8f5' : '#ff8cff'}>
          <rect x={b.x} y={b.hi} width="1" height={b.lo - b.hi} />
          <rect x={b.x - 2} y={b.top} width="5" height={Math.max(1.5, b.bot - b.top)} />
        </g>
      ))}
      <polyline points={path(c.ma)} fill="none" stroke="#6e6e6e" strokeWidth="6.5" strokeLinejoin="round" />
      {runs(c.ma).map((r, i) => (
        <polyline key={i} points={path(r.pts)} fill="none" stroke={r.c === 'g' ? '#00ff00' : '#ff00ff'} strokeWidth="4.5" strokeLinejoin="round" strokeLinecap="round" />
      ))}
      <path d={`M8 ${c.opens[0] + 0.5}H1137M1151 ${c.opens[1] + 0.5}H3280`} stroke="#fff" strokeWidth="3" />
      <polyline points={path(c.upper)} fill="none" stroke="#ff69b4" strokeWidth="4" strokeLinejoin="round" />
      <polyline points={path(c.lower)} fill="none" stroke="#1e90ff" strokeWidth="4" strokeLinejoin="round" />
      {c.murrey.map(([x, y, w, t, color]) => (
        <text key={t} x={x} y={y} fill={color} fontSize="25" textLength={w} lengthAdjust="spacingAndGlyphs" className="font-['Noto_Sans'] italic">
          {t}
        </text>
      ))}
      {c.notes.map(([x, y, w, t, color]) => (
        <text key={y} x={x} y={y} fill={color} fontSize="17" textLength={w} lengthAdjust="spacingAndGlyphs" className="font-['DejaVu_Sans_Mono'] font-bold">
          {t}
        </text>
      ))}
      <path d={`M${c.top === 48 ? 3288 : 3292} ${c.top}h9l-4.5 5z`} fill="#fff" />
    </svg>
  );
};

const OscPlot = ({ pts, top, width }: { pts: Pt[]; top: number; width: number }) => {
  const zero = top + 73.5;
  const at = (x: number) => {
    const i = pts.findIndex((p) => p.x >= x);
    if (i <= 0) return zero - (i < 0 ? pts[pts.length - 1].y : pts[0].y);
    const [a, b] = [pts[i - 1], pts[i]];
    return zero - (a.y + ((b.y - a.y) * (x - a.x)) / (b.x - a.x || 1));
  };
  const hist = Array.from({ length: 410 }, (_, i) => {
    const x = 7 + 8 * i;
    return { x, v: Math.round((at(x) * 0.5 + at(x - 8) * 0.25 + at(x + 8) * 0.25) * 1.1) };
  });
  return (
    <svg className="relative block" width={width} height="147" viewBox={`7 ${top} ${width} 147`}>
      {hist.map(({ x, v }) => {
        const inner = Math.min(29, Math.abs(v));
        const outer = Math.abs(v) - inner;
        return (
          <g key={x} shapeRendering="crispEdges">
            <rect x={x - 3} y={v > 0 ? zero - inner : zero} width="7" height={inner} fill={v > 0 ? '#1e90ff' : '#ff4fa0'} />
            <rect x={x - 3} y={v > 0 ? zero - inner - outer : zero + inner} width="7" height={outer} fill={v > 0 ? '#0000ff' : '#ff0000'} />
          </g>
        );
      })}
      {[-58, -29, 0, 30, 59].map((d) => (
        <line key={d} x1="7" x2={7 + width} y1={Math.round(zero + d) - 0.5} y2={Math.round(zero + d) - 0.5} stroke="#737577" strokeDasharray="18 6" />
      ))}
      {[1151.5, 3359.5].map((x) => (
        <line key={x} x1={x} x2={x} y1={top} y2={top + 147} stroke="#b8b8b8" strokeDasharray="3 3" />
      ))}
      <polyline points={path(pts)} fill="none" stroke="#000" strokeWidth="5" strokeLinejoin="round" />
      {runs(pts)
        .filter((r) => r.c !== 'k')
        .map((r, i) => (
          <polyline key={i} points={path(r.pts)} fill="none" stroke={r.c === 'w' ? '#fff' : '#ffd700'} strokeWidth="3" strokeLinejoin="round" />
        ))}
    </svg>
  );
};

const Sessions = ({ symbol }: { symbol: string }) => (
  <div className="absolute left-[3px] top-0.5 flex items-center text-white">
    <span className="size-0 border-x-4 border-t-4 border-x-transparent border-t-[#b0b0b0]" />
    <Fit w={symbol.length === 7 ? 38 : 41} className="ml-1 -mt-1 text-[11px] leading-4 text-[#9a9a9a] font-['Noto_Sans']">
      {symbol}
    </Fit>
    <div className={`flex gap-0.5 text-[14px] font-bold leading-4 font-['Liberation_Sans'] ${symbol.length === 7 ? 'ml-[25px]' : 'ml-[22px]'}`}>
      <div className="bg-[#962222] pl-2 pr-2.5"><Fit w={138}>HONG KONG 05:15</Fit></div>
      <div className="bg-[#962222] px-[9px]"><Fit w={113}>{'LONDON  21:15'}</Fit></div>
      <div className="bg-[#0078d7] px-[11px]"><Fit w={127}>{'NEW YORK  16:15'}</Fit></div>
    </div>
  </div>
);

const PAIRS = [
  { name: 'WS30', nw: 50, bid: '31113', bw: 46, pfo: '92', pw: 21, hilo: '460', up: true },
  { name: 'US500', nw: 55, bid: '3827.8', bw: 56, pfo: '265', pw: 33, hilo: '478', up: true },
  { name: 'NDX100', nw: 63, bid: '13112', bw: 45, pfo: '186', pw: 30, hilo: '199', up: true },
  { name: 'US2000', nw: 66, bid: '2092.9', bw: 59, pfo: '29', pw: 22, hilo: '536', up: false },
];

const FRAMES: [string, number, string][] = [
  ['M1', 17, 'ml-0'], ['M5', 19, 'ml-[14px]'], ['M15', 25, 'ml-2'], ['M30', 27, 'ml-1.5'], ['H1', 15, 'ml-2'],
  ['H4', 16, 'ml-4'], ['D1', 14, 'ml-[15px]'], ['W1', 18, 'ml-[17px]'], ['MN1', 26, 'ml-[9px]'],
];

const PairsPanel = ({ active }: { active: string }) => (
  <div className="absolute left-[10px] top-[120px] h-[146px] w-[369px] border-[3px] border-white bg-[#1f2830] pl-[7px] font-bold text-[#b8b8b8] [-webkit-text-stroke:0.4px] font-['Liberation_Sans_Narrow','Liberation_Sans']">
    <div className="flex h-[22px] items-center pl-[43px] text-[18px] leading-none">
      {FRAMES.map(([t, w, gap]) => (
        <Fit key={t} w={w} className={t === 'M5' ? `${gap} text-[#1e90ff]` : gap}>{t}</Fit>
      ))}
    </div>
    <div className="flex h-[22px] items-center text-[19px] leading-none text-[#a4a4a4]">
      <Fit w={38}>PAIRS</Fit>
      <Fit w={21} className="ml-[54px]">Bid</Fit>
      <Fit w={23} className="ml-[39px]">PFO</Fit>
      <Fit w={27} className="ml-[21px]">HiLo</Fit>
      <Fit w={9} className="ml-[23px]">9</Fit>
      <Fit w={15} className="ml-[18px]">18</Fit>
      <Fit w={15} className="ml-3">27</Fit>
      <Fit w={17} className="ml-3">36</Fit>
    </div>
    <div className="text-[24px] leading-[22px]">
      {PAIRS.map((p) => {
        const tone = p.up ? 'text-[#00ff00]' : 'text-[#ee82ee]';
        return (
          <div key={p.name} className="grid h-[22px] grid-cols-[77px_70px_46px_46px_auto]">
            <Fit w={p.nw} className={p.name === active ? 'text-[#1e90ff]' : 'text-white'}>{p.name}</Fit>
            <Fit w={p.bw} className={tone}>{p.bid}</Fit>
            <Fit w={p.pw} className={tone}>{p.pfo}</Fit>
            <Fit w={32}>{p.hilo}</Fit>
            <div className="flex items-center gap-[3px]">
              {[9, 18, 27, 36].map((n) => (
                <div key={n} className="h-3 w-6 bg-[#1e90ff]" />
              ))}
            </div>
          </div>
        );
      })}
    </div>
  </div>
);

const InfoPanel = ({ d }: { d: Record<string, string> }) => (
  <div className="absolute right-[9px] top-[10px] h-[275px] w-[95px] border border-white bg-[#1e2733] px-2 text-white font-['Liberation_Sans']">
    <div className="flex flex-col items-end pr-0.5">
      <Fit w={d.name === 'WS30' ? 57 : 63} className="mt-[7px] h-6 text-[27px] font-bold leading-6 [-webkit-text-stroke:0.6px] font-['Liberation_Sans_Narrow','Liberation_Sans']">{d.name}</Fit>
      <Fit w={d.name === 'WS30' ? 69 : 76} className="h-[22px] text-[21px] font-bold leading-[22px] text-[#00ff00] [-webkit-text-stroke:0.4px]">{d.bid}</Fit>
      <Fit w={62} className="mr-1 h-4 text-[14px] font-bold leading-4 font-['DejaVu_Sans_Mono']">{d.spd}</Fit>
    </div>
    <div className="mt-[17px] flex flex-col items-center">
      <Fit w={36} className="h-[18px] text-[14px] font-bold leading-[18px] text-[#ffd700] font-['DejaVu_Sans_Mono']">Open</Fit>
      <Fit w={54} className="h-[15px] text-[17px] font-bold leading-[15px] text-[#00ff00]">{d.open}</Fit>
      <Fit w={71} className="h-5 text-[14px] font-bold leading-5 text-[#ffd700] font-['DejaVu_Sans_Mono']">BidRatio</Fit>
      <div className={`flex h-6 w-[72px] items-center justify-end pr-1.5 text-[26px] leading-none font-['Noto_Sans'] ${d.ratioBox}`}>
        <Fit w={48}>{d.ratio}</Fit>
      </div>
    </div>
    <div className="mt-[3px] pr-0.5 text-[15px] font-bold leading-4">
      {[['PFO', d.pfo, 'text-[#00ff00]'], ['HiLo', d.hilo, 'text-[#b8b8b8]'], ['ADR', d.adr, d.adrTone], ['61%', d.p61, 'text-white'], ['38%', d.p38, 'text-white']].map(([k, v, tone]) => (
        <div key={k} className="flex h-4 justify-between">
          <Fit w={30} className={k === 'HiLo' ? 'text-[#b8b8b8]' : ''}>{k}</Fit>
          <Fit w={v.length * 8} className={tone}>{v}</Fit>
        </div>
      ))}
    </div>
    <div className="flex h-6 items-start justify-end pr-0.5">
      <Fit w={39} className="text-[21px] font-bold leading-6 text-[#00ff00]">{d.pct}</Fit>
      <Fit w={23} className="text-[11px] leading-4">ADR</Fit>
    </div>
  </div>
);

const Buttons = () => (
  <>
    <div className="absolute bottom-[29px] left-[3px] flex h-6 w-[39px] items-center justify-center rounded-sm border border-[#5c5c5c] bg-[#131313] text-[14px] text-[#808080] font-['Noto_Sans']">
      <Fit w={19}>ON</Fit>
    </div>
    <div className="absolute bottom-0 left-[198px] flex h-6 items-center gap-1.5 text-[20px] font-bold leading-none text-[#b4b4b4] [-webkit-text-stroke:0.4px] font-['Liberation_Sans_Narrow','Liberation_Sans']">
      <div className="flex h-6 w-[37px] items-center justify-center bg-[#8b0000]"><Fit w={24}>ZZ1</Fit></div>
      <div className="flex h-6 w-[37px] items-center justify-center bg-[#8b0000]"><Fit w={26}>ZZ2</Fit></div>
      <div className="ml-10 flex h-6 w-[55px] items-center justify-center bg-[#8b0000] text-[#808080]"><Fit w={45}>VWAP</Fit></div>
      <div className="flex h-6 w-[65px] items-center justify-center bg-[#8b0000]"><Fit w={53}>ADR D1</Fit></div>
    </div>
  </>
);

const SignalLine = () => (
  <div className="absolute left-[3px] top-[-2px] flex h-7 items-center whitespace-pre text-[16px] leading-5 text-[#00ff00] font-['Liberation_Sans'] font-bold">
    <Fit w={12} className="text-[9px] text-[#808080] font-normal">{'X>'}</Fit>
    <Fit w={44} className="ml-[90px] text-white text-[14px]">SIGNAL</Fit>
    <Fit w={47} className="ml-1.5">M1 M5</Fit>
    <Fit w={98} className="ml-2 pt-1.5 text-[20px]">TREND/UP</Fit>
    <Fit w={75} className="ml-3 text-white text-[14px]">MAIN TREND</Fit>
    <Fit w={114} className="ml-1.5">M15  M30  H1  H4</Fit>
    <Fit w={98} className="ml-2.5 pt-1.5 text-[20px]">TREND/UP</Fit>
    <Fit w={54} className="ml-2.5 text-[#ffff00] text-[14px]">STRONG</Fit>
  </div>
);

const TimeAxis = () => (
  <div className="flex h-[21px] pl-2 text-[11px] text-[#9fa1a3] font-['Noto_Sans']">
    {TIMES.map((t, i) => (
      <div key={t} className="w-16 shrink-0">
        <div className="h-[3px] w-px bg-[#a9a9a9]" />
        <Fit w={i ? 48 : 44} className="-ml-0.5 leading-[11px]">{t}</Fit>
      </div>
    ))}
  </div>
);

const PriceAxis = ({ prices, wide, bid, ask, offset }: { prices: string[]; wide: boolean; bid: string; ask: string; offset: string }) => (
  <div className="relative flex-1 text-[11px] leading-[33px] text-[#9fa1a3] font-['Noto_Sans']">
    <div className="-mb-5 -mt-2">
      {prices.map((p) => (
        <div key={p} className="flex h-[33px] items-center">
          <span className="h-px w-[3px] bg-[#a9a9a9]" />
          <Fit w={wide ? 38 : 33} className={wide ? 'ml-[3px]' : 'ml-0.5'}>{p}</Fit>
        </div>
      ))}
    </div>
    <div className={`absolute left-0.5 right-1 leading-3 text-[#333] ${offset}`}>
      <div className="h-3 bg-[#ff8c00] pl-[3px]"><Fit w={wide ? 38 : 33}>{ask}</Fit></div>
      <div className="relative -mt-[7px] h-3 bg-[#b0b0b0] pl-[3px]"><Fit w={wide ? 38 : 33}>{bid}</Fit></div>
    </div>
  </div>
);

const OscAxis = () => (
  <div className="flex flex-1 flex-col pl-0.5 pt-[3px] text-[11px] leading-[9px] text-[#9fa1a3] font-['Noto_Sans']">
    <Fit w={15}>250</Fit>
    <Fit w={15}>200</Fit>
    <Fit w={15} className="mt-5">100</Fit>
    <Fit w={19} className="mt-5">0.00</Fit>
    <Fit w={18} className="mt-5">-100</Fit>
    <Fit w={18} className="mt-[21px]">-200</Fit>
    <Fit w={18} className="-mt-px">-250</Fit>
  </div>
);

const ChartWindow = ({ chart, info, active, children }: { chart: Chart; info: Record<string, string>; active: string; children: React.ReactNode }) => (
  <section className="flex shrink-0 flex-col border-r border-[#f4f2ee] bg-[#23282c]">
    <div className="flex pl-1.5">
      <div className="relative shrink-0 border border-[#a9a9a9]">
        <PricePlot c={chart} />
        <Sessions symbol={chart.symbol} />
        <PairsPanel active={active} />
        <InfoPanel d={info} />
        <Buttons />
      </div>
      {children}
    </div>
    <div className="mt-px flex pl-1.5">
      <div className="relative shrink-0 overflow-hidden border border-[#a9a9a9]">
        <SignalLine />
        <OscPlot pts={chart.osc} top={chart.top + chart.height + 3} width={chart.width} />
      </div>
      <OscAxis />
    </div>
    <TimeAxis />
  </section>
);

const App = () => (
  <div className="flex h-[2160px] w-[3840px] flex-col overflow-hidden bg-[#d4d0c8] text-black">
    <header className="relative flex h-[22px] shrink-0 items-center justify-center border-t border-[#f4f4f4] bg-[#d9d9d9] font-['DejaVu_Sans_Mono']">
      <Fit w={237} className="text-[12px] text-[#2a2a2a]">506172: GoMarkets-Real 1 - WS30,M5</Fit>
      <div className="absolute right-2.5 flex items-center gap-6">
        <span className="h-0.5 w-1.5 bg-[#333]" />
        <svg width="7" height="7" viewBox="0 0 7 7"><path d="M2.5 0H7V4.5zM0 2.5V7H4.5z" fill="#333" /></svg>
        <svg width="14" height="14" viewBox="0 0 14 14"><circle cx="7" cy="7" r="7" fill="#8fb573" /><path d="M4.5 4.5l5 5M9.5 4.5l-5 5" stroke="#fff" strokeWidth="1.6" /></svg>
      </div>
    </header>
    <nav className="flex h-[19px] shrink-0 items-center pt-1 text-[12px] text-[#1a1a1a] font-['Noto_Sans']">
      {[['File', 19, 'ml-1.5'], ['View', 24, 'ml-4'], ['Insert', 29, 'ml-[17px]'], ['Charts', 32, 'ml-[18px]'], ['Tools', 26, 'ml-[18px]'], ['Window', 39, 'ml-[17px]'], ['Help', 22, 'ml-[18px]']].map(([t, w, gap]) => (
        <Fit key={t} w={w as number} className={gap as string}>
          <u>{(t as string)[0]}</u>{(t as string).slice(1)}
        </Fit>
      ))}
    </nav>
    <div className="h-[3px] shrink-0 border-y border-[#808080] bg-[#3a3c3e]" />
    <div className="h-[3px] shrink-0 bg-[#23282c]" />
    <main className="flex shrink-0 flex-col border-r-4 border-[#d4d0c8]">
      <ChartWindow
        chart={ws30}
        active="WS30"
        info={{ name: 'WS30', bid: '31113', spd: 'SPD:3.0', open: '31021', ratio: '73%', ratioBox: 'bg-[#42699a] text-[#b0b0b0]', pfo: '92', hilo: '460', adr: '450', adrTone: 'text-[#ff8c00]', p61: '278', p38: '172', pct: '20%' }}
      >
        <PriceAxis prices={WS30_PRICES} wide bid="31113.16" ask="31116.16" offset="top-[247px]" />
      </ChartWindow>
      <div className="h-px bg-white" />
      <div className="h-px bg-[#808080]" />
      <div className="h-[3px] bg-[#2c3033]" />
      <ChartWindow
        chart={us500}
        active="US500"
        info={{ name: 'US500', bid: '3827.8', spd: 'SPD:5.3', open: '3801.3', ratio: '99%', ratioBox: 'bg-[#00ff00] text-[#222]', pfo: '265', hilo: '478', adr: '602', adrTone: 'text-[#00ff00]', p61: '372', p38: '230', pct: '44%' }}
      >
        <PriceAxis prices={US500_PRICES} wide={false} bid="3827.82" ask="3828.35" offset="top-[34px]" />
      </ChartWindow>
    </main>
    <footer className="flex flex-1 items-center border-b border-t-2 border-b-[#333] border-t-white pt-2 text-[12px] leading-3 text-[#1a1a1a] font-['Noto_Sans']">
      <Fit w={89} className="ml-0.5">For Help, press F1</Fit>
      <Fit w={85} className="ml-[3047px]">XARD UNIVERSE</Fit>
      <svg className="ml-auto mr-0.5" width="22" height="12" viewBox="0 0 22 12">
        <rect width="22" height="12" fill="#2b4a3a" />
        <path d="M2 10V6M5 10V4M8 10V7M11 10V3M14 10V5M17 10V2M20 10V6" stroke="#58c878" strokeWidth="2" />
      </svg>
      <Fit w={49} className="mr-[66px]">2574/4 kb</Fit>
    </footer>
  </div>
);

export default App;
